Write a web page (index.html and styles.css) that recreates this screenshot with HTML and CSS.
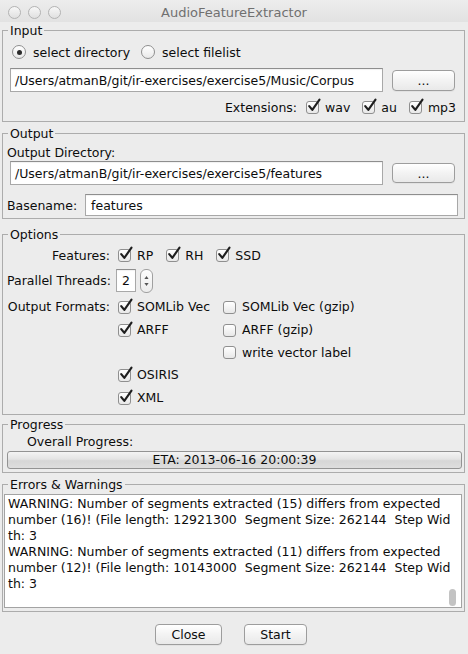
FILE: index.html
```html
<!DOCTYPE html>
<html>
<head>
<meta charset="utf-8">
<title>AudioFeatureExtractor</title>
<link rel="stylesheet" href="styles.css">
</head>
<body>
<div class="window">
  <div class="titlebar">
    <div class="lights"><span class="light"></span><span class="light"></span><span class="light"></span></div>
    <div class="title">AudioFeatureExtractor</div>
    <div></div>
  </div>

  <fieldset class="group g-input">
    <legend>Input</legend>
    <div class="radio-row">
      <label class="radio"><span class="radio-dot on"></span>select directory</label>
      <label class="radio"><span class="radio-dot"></span>select filelist</label>
    </div>
    <div class="path-row">
      <div class="field path">/Users/atmanB/git/ir-exercises/exercise5/Music/Corpus</div>
      <div class="btn browse">...</div>
    </div>
    <div class="ext-row">
      <span class="ext-label">Extensions:</span>
      <label class="cb"><span class="box on"><svg viewBox="0 0 14 14"><path d="M3 6.6 L5.9 10.2 L12.6 0.6"/></svg></span>wav</label>
      <label class="cb"><span class="box on"><svg viewBox="0 0 14 14"><path d="M3 6.6 L5.9 10.2 L12.6 0.6"/></svg></span>au</label>
      <label class="cb"><span class="box on"><svg viewBox="0 0 14 14"><path d="M3 6.6 L5.9 10.2 L12.6 0.6"/></svg></span>mp3</label>
    </div>
  </fieldset>

  <fieldset class="group g-output">
    <legend>Output</legend>
    <div class="line-label">Output Directory:</div>
    <div class="path-row out">
      <div class="field path">/Users/atmanB/git/ir-exercises/exercise5/features</div>
      <div class="btn browse small">...</div>
    </div>
    <div class="base-row">
      <span>Basename:</span>
      <div class="field base">features</div>
    </div>
  </fieldset>

  <fieldset class="group g-options">
    <legend>Options</legend>
    <div class="opts">
      <span class="olabel">Features:</span>
      <div class="feat">
        <label class="cb"><span class="box on"><svg viewBox="0 0 14 14"><path d="M3 6.6 L5.9 10.2 L12.6 0.6"/></svg></span>RP</label>
        <label class="cb"><span class="box on"><svg viewBox="0 0 14 14"><path d="M3 6.6 L5.9 10.2 L12.6 0.6"/></svg></span>RH</label>
        <label class="cb"><span class="box on"><svg viewBox="0 0 14 14"><path d="M3 6.6 L5.9 10.2 L12.6 0.6"/></svg></span>SSD</label>
      </div>

      <span class="olabel">Parallel Threads:</span>
      <div class="spin">
        <div class="field num">2</div>
        <span class="stepper"><svg viewBox="0 0 13 24" width="13" height="24"><path d="M6.5 7 L8.6 10 L4.4 10 Z"/><path d="M6.5 17 L8.6 14 L4.4 14 Z"/></svg></span>
      </div>
      <span></span>

      <span class="olabel">Output Formats:</span>
      <label class="cb"><span class="box on"><svg viewBox="0 0 14 14"><path d="M3 6.6 L5.9 10.2 L12.6 0.6"/></svg></span>SOMLib Vec</label>
      <label class="cb"><span class="box"></span>SOMLib Vec (gzip)</label>

      <span></span>
      <label class="cb"><span class="box on"><svg viewBox="0 0 14 14"><path d="M3 6.6 L5.9 10.2 L12.6 0.6"/></svg></span>ARFF</label>
      <label class="cb"><span class="box"></span>ARFF (gzip)</label>

      <span></span>
      <span></span>
      <label class="cb"><span class="box"></span>write vector label</label>

      <span></span>
      <label class="cb"><span class="box on"><svg viewBox="0 0 14 14"><path d="M3 6.6 L5.9 10.2 L12.6 0.6"/></svg></span>OSIRIS</label>
      <span></span>

      <span></span>
      <label class="cb"><span class="box on"><svg viewBox="0 0 14 14"><path d="M3 6.6 L5.9 10.2 L12.6 0.6"/></svg></span>XML</label>
      <span></span>
    </div>
  </fieldset>

  <fieldset class="group g-progress">
    <legend>Progress</legend>
    <div class="prog-label">Overall Progress:</div>
    <div class="progress">ETA: 2013-06-16 20:00:39</div>
  </fieldset>

  <fieldset class="group g-errors">
    <legend>Errors &amp; Warnings</legend>
    <div class="log">
      <div class="ln">WARNING: Number of segments extracted (15) differs from expected</div>
      <div class="ln">number (16)! (File length: 12921300  Segment Size: 262144  Step Wid</div>
      <div class="ln">th: 3</div>
      <div class="ln">WARNING: Number of segments extracted (11) differs from expected</div>
      <div class="ln">number (12)! (File length: 10143000  Segment Size: 262144  Step Wid</div>
      <div class="ln">th: 3</div>
      <span class="thumb"></span>
    </div>
  </fieldset>

  <div class="actions">
    <div class="btn action close">Close</div>
    <div class="btn action start">Start</div>
  </div>
</div>
</body>
</html>
```

FILE: styles.css
```css
* { box-sizing: border-box; }
html, body { margin: 0; padding: 0; }
body {
  background: #ececec;
  font-family: "DejaVu Sans", sans-serif;
  font-size: 12.5px;
  color: #0d0d0d;
}
.window {
  width: 468px;
  height: 654px;
  background: #ececec;
  display: flex;
  flex-direction: column;
  overflow: hidden;
}

/* title bar */
.titlebar {
  height: 22px;
  flex: none;
  padding-top: 2px;
  display: grid;
  grid-template-columns: 1fr auto 1fr;
  align-items: center;
  background: linear-gradient(#ededed, #e2e2e2);
}
.lights { display: flex; gap: 7px; padding-left: 8px; }
.light {
  width: 13px; height: 13px;
  border-radius: 50%;
  border: 1px solid #b3b3b3;
  background: linear-gradient(#f7f7f7, #e0e0e0);
}
.title { color: #707070; font-size: 13px; }

/* groups */
.group {
  margin: 0 3px 0 2px;
  border: 1px solid #acacac;
  padding: 0 2px 0 4px;
  min-width: 0;
  flex: none;
}
.group legend {
  padding: 0 2px;
  margin-left: 1px;
  height: 15px;
  line-height: 15px;
}
.g-input { margin-top: 1px; padding-top: 5px; padding-bottom: 6px; }
.g-output { margin-top: 4px; padding-top: 4px; padding-bottom: 2px; }
.g-options { margin-top: 8px; padding-top: 2px; padding-bottom: 5px; }
.g-progress { margin-top: 2px; padding-top: 2px; padding-bottom: 3px; }
.g-errors { margin-top: 4px; padding-top: 2px; padding-bottom: 3px; padding-left: 1px; }
.g-errors legend { margin-left: 4px; }

/* radios */
.radio-row { display: flex; align-items: center; height: 18px; padding-left: 5px; gap: 11px; }
.radio { display: flex; align-items: center; gap: 7px; }
.radio-dot {
  width: 14px; height: 14px;
  border-radius: 50%;
  border: 1px solid #8f8f8f;
  background: linear-gradient(#ffffff, #e9e9e9);
  display: flex; align-items: center; justify-content: center;
}
.radio-dot.on::after {
  content: "";
  width: 5px; height: 5px;
  border-radius: 50%;
  background: #2b2b2b;
}

/* fields & buttons */
.path-row { display: flex; align-items: center; gap: 9px; padding-left: 3px; margin-top: 7px; }
.field {
  background: #fff;
  border: 1px solid #a8a8a8;
  border-top-color: #8e8e8e;
  box-shadow: inset 0 1px 1px rgba(0,0,0,0.06);
  display: flex; align-items: center;
  white-space: nowrap;
  overflow: hidden;
}
.field.path { width: 373px; height: 24px; padding-left: 4px; }
.btn {
  border: 1px solid #9d9d9d;
  border-radius: 4px;
  background: linear-gradient(#ffffff, #f3f3f3 50%, #e9e9e9);
  box-shadow: 0 1px 0 rgba(0,0,0,0.04);
  display: flex; align-items: center; justify-content: center;
}
.btn.browse { width: 63px; height: 21px; }
.btn.browse.small { height: 20px; }

.ext-row { display: flex; justify-content: flex-end; align-items: center; height: 16px; margin-top: 7px; padding-right: 6px; gap: 12px; }
.ext-label { margin-right: -3px; }

/* checkboxes */
.cb { display: flex; align-items: center; gap: 6px; white-space: nowrap; }
.box {
  position: relative;
  width: 13px; height: 13px;
  flex: none;
  border: 1px solid #8f8f8f;
  border-radius: 3px;
  background: linear-gradient(#ffffff, #e8e8e8);
  margin-top: 1px;
}
.box svg {
  position: absolute;
  left: -1px; top: -3px;
  width: 15px; height: 15px;
  overflow: visible;
}
.box svg path {
  fill: none;
  stroke: #1f1f1f;
  stroke-width: 2;
  stroke-linecap: round;
  stroke-linejoin: round;
}

/* output */
.line-label { height: 16px; line-height: 16px; }
.path-row.out { margin-top: 0; }
.base-row { display: flex; align-items: center; gap: 8px; margin-top: 9px; padding-right: 4px; }
.field.base { flex: 1; height: 22px; padding-left: 5px; }

/* options */
.opts {
  display: grid;
  grid-template-columns: 103px 97px 1fr;
  column-gap: 8px;
  grid-template-rows: 22px 29.5px repeat(5, 22.7px);
  align-items: center;
}
.olabel { text-align: right; white-space: nowrap; }
.feat { grid-column: 2 / 4; display: flex; align-items: center; gap: 13px; }
.spin { display: flex; align-items: center; gap: 4px; margin-left: -2px; }
.field.num { width: 20px; height: 23px; justify-content: center; }
.stepper {
  width: 13px; height: 24px;
  border: 1px solid #a0a0a0;
  border-radius: 6px;
  background: linear-gradient(#fdfdfd, #ececec);
  position: relative;
  display: block;
}
.stepper svg { position: absolute; left: -1px; top: -1px; }
.stepper svg path { fill: #555; }

/* progress */
.prog-label { height: 16px; line-height: 16px; margin-left: 20px; }
.progress {
  margin-top: 1px;
  height: 18px;
  border: 1px solid #939393;
  border-radius: 3px;
  background: linear-gradient(#f4f4f4, #e4e4e4 45%, #d6d6d6 55%, #dedede);
  display: flex; align-items: center; justify-content: center;
}

/* log */
.log {
  position: relative;
  height: 114px;
  background: #fff;
  border: 1px solid #a3a3a3;
  padding: 1px 3px;
  overflow: hidden;
}
.ln { height: 16px; line-height: 16px; white-space: pre; }
.thumb {
  position: absolute;
  right: 5px; bottom: 1px;
  width: 7px; height: 17px;
  border-radius: 4px;
  background: #c3c3c3;
}

/* bottom buttons */
.actions { display: flex; justify-content: center; gap: 22px; margin-top: 12px; padding-right: 6px; }
.btn.action { height: 21px; }
.btn.close { width: 67px; }
.btn.start { width: 63px; }
```
